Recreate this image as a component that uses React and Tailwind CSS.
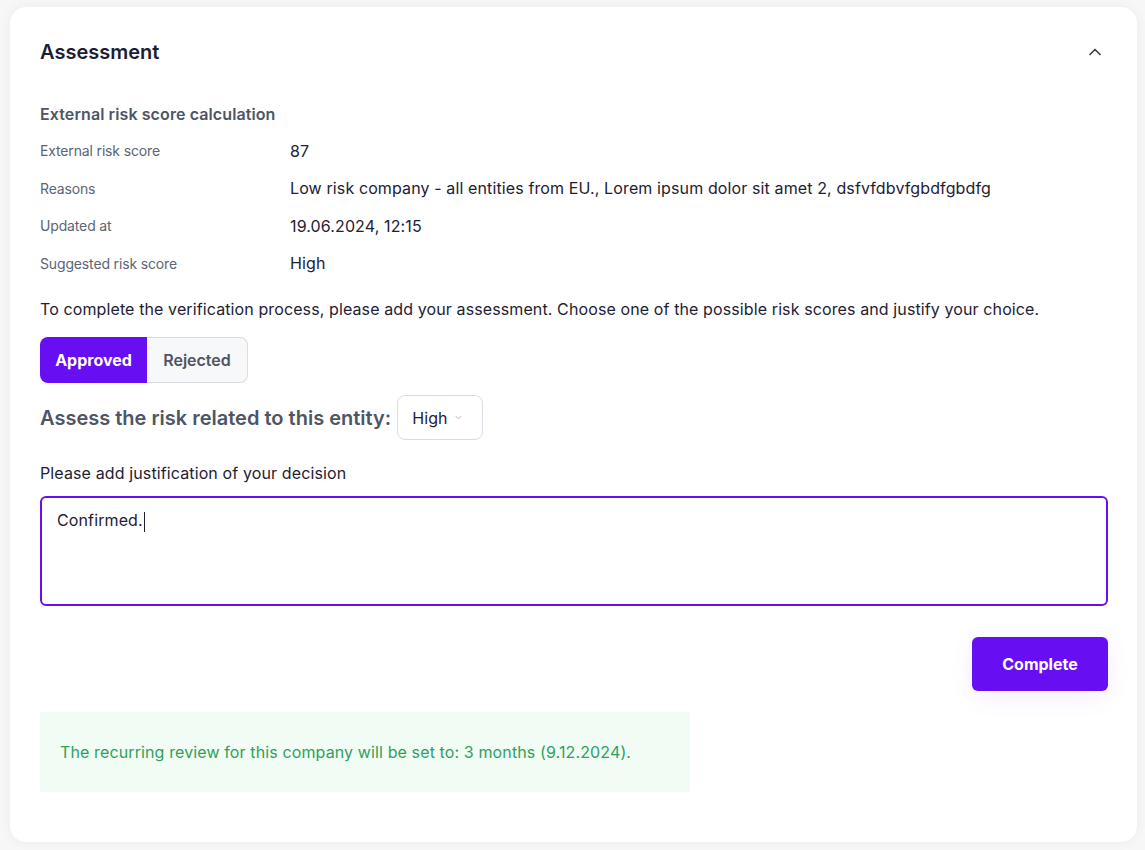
import { ChevronUp, ChevronDown } from "lucide-react";

const rows = [
  { label: "External risk score", value: "87" },
  {
    label: "Reasons",
    value:
      "Low risk company - all entities from EU., Lorem ipsum dolor sit amet 2, dsfvfdbvfgbdfgbdfg",
  },
  { label: "Updated at", value: "19.06.2024, 12:15" },
  { label: "Suggested risk score", value: "High" },
];

export default function App() {
  return (
    <div
      className="min-h-[850px] bg-[#f7f7f8] pl-[10px] pt-[7px] pb-[8px]"
      style={{ fontFamily: "Inter, 'Noto Sans', sans-serif" }}
    >
      <div className="w-[1127px] rounded-2xl bg-white pl-[30px] pr-[29px] pt-[31px] pb-[50px] shadow-[0_0_12px_rgba(0,0,0,0.05)]">
        {/* HEADER */}
        <div className="flex h-[28px] items-center justify-between">
          <h2 className="text-[20px] font-semibold leading-[28px] text-[#1b1d36]">
            Assessment
          </h2>
          <ChevronUp className="mr-[3px] h-5 w-5 text-[#3a3f4b]" strokeWidth={2} />
        </div>

        {/* EXTERNAL SCORE */}
        <h3 className="mt-[36px] text-[16px] font-semibold leading-[24px] tracking-[0.1px] text-[#4d5566]">
          External risk score calculation
        </h3>
        <div className="mt-[6px]">
          {rows.map((r) => (
            <div key={r.label} className="flex h-[37.5px] items-center">
              <span className="w-[250px] text-[14px] tracking-[-0.15px] text-[#5c6475]">
                {r.label}
              </span>
              <span className="text-[16px] tracking-[0.12px] text-[#1e2133]">{r.value}</span>
            </div>
          ))}
        </div>

        <p className="mt-[15px] text-[16px] leading-[24px] tracking-[0.11px] text-[#1e2133]">
          To complete the verification process, please add your assessment. Choose one of the
          possible risk scores and justify your choice.
        </p>

        {/* TOGGLE */}
        <div className="mt-[16px] flex h-[46px]">
          <button className="w-[107px] rounded-l-lg bg-[#680ef2] text-[16px] font-bold text-white">
            Approved
          </button>
          <button className="w-[101px] rounded-r-lg border border-l-0 border-[#d9dce2] bg-[#f7f8fa] text-[16px] font-semibold text-[#4d5566]">
            Rejected
          </button>
        </div>

        {/* RISK SELECT */}
        <div className="mt-[12px] flex items-center gap-[6px]">
          <span className="text-[20px] font-semibold text-[#4d5566]">
            Assess the risk related to this entity:
          </span>
          <div className="flex h-[45px] w-[86px] items-center gap-[5px] rounded-lg border border-[#d9dce2] pl-[14px]">
            <span className="text-[16px] tracking-[0.12px] text-[#1e2133]">High</span>
            <ChevronDown className="h-[11px] w-[11px] text-[#9aa0ab]" strokeWidth={1.5} />
          </div>
        </div>

        {/* JUSTIFICATION */}
        <p className="mt-[21px] text-[16px] leading-[24px] tracking-[0.12px] text-[#1e2133]">
          Please add justification of your decision
        </p>
        <div className="mt-[11px] h-[110px] rounded-md border-2 border-[#680ef2] px-[15px] py-[10px]">
          <span className="text-[16px] leading-[24px] tracking-[0.12px] text-[#1e2133]">
            Confirmed.
          </span>
          <span className="ml-[1px] inline-block h-[20px] w-[1px] bg-[#1e2133] align-middle" />
        </div>

        <div className="mt-[31px] flex justify-end">
          <button className="h-[54px] w-[136px] rounded-md bg-[#680ef2] text-[16px] font-bold text-white shadow-[0_6px_24px_rgba(104,14,242,0.08)]">
            Complete
          </button>
        </div>

        {/* INFO */}
        <div className="mt-[21px] flex h-[80px] w-[650px] items-center bg-[#f0fcf4] px-[20px]">
          <span className="text-[16px] tracking-[0.12px] text-[#30a05e]">
            The recurring review for this company will be set to: 3 months (9.12.2024).
          </span>
        </div>
      </div>
    </div>
  );
}
